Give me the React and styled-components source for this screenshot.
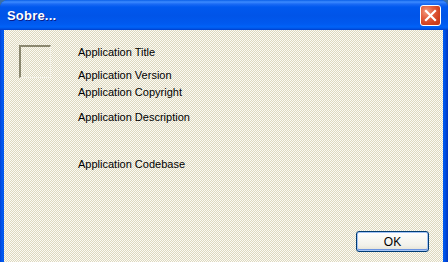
import React from "react";
import styled, { createGlobalStyle } from "styled-components";

const GlobalStyle = createGlobalStyle`
  html, body {
    margin: 0;
    padding: 0;
    background: #3a6ea5;
    overflow: hidden;
  }
`;

const info = [
  { text: "Application Title", gap: 0 },
  { text: "Application Version", gap: 10 },
  { text: "Application Copyright", gap: 4 },
  { text: "Application Description", gap: 12 },
  { text: "Application Codebase", gap: 34 },
];

function App() {
  return (
    <>
      <GlobalStyle />
      <Window>
        <TitleBar>
          <Title>Sobre...</Title>
          <CloseButton aria-label="Fechar">
            <svg width="13" height="13" viewBox="0 0 13 13">
              <path
                d="M2 2 L11 11 M11 2 L2 11"
                stroke="#fff"
                strokeWidth="2.2"
                strokeLinecap="square"
              />
            </svg>
          </CloseButton>
        </TitleBar>
        <Body>
          <Main>
            <Logo />
            <InfoList>
              {info.map((item) => (
                <InfoLine key={item.text} $gap={item.gap}>
                  {item.text}
                </InfoLine>
              ))}
            </InfoList>
          </Main>
          <Footer>
            <OkButton>OK</OkButton>
          </Footer>
        </Body>
      </Window>
    </>
  );
}

export default App;

const Window = styled.div`
  width: 448px;
  height: 262px;
  display: flex;
  flex-direction: column;
  border-radius: 8px 8px 0 0;
  overflow: hidden;
  background: linear-gradient(90deg, #0043d8, #0058ee 2px, #0058ee 444px, #0036c0);
`;

const TitleBar = styled.div`
  height: 30px;
  flex: none;
  display: flex;
  align-items: center;
  justify-content: space-between;
  padding: 0 7px 0 7px;
  box-sizing: border-box;
  background: linear-gradient(
    #0a5fe8 0,
    #3d8bff 2px,
    #1b6bf5 4px,
    #0058ee 7px,
    #0054e8 16px,
    #005af0 24px,
    #0063f8 27px,
    #0050e0 29px,
    #003cc8 30px
  );
`;

const Title = styled.span`
  font-family: "Liberation Sans", Arial, sans-serif;
  font-weight: bold;
  font-size: 13px;
  color: #fff;
  text-shadow: 1px 1px #0a1e8a;
  letter-spacing: 0.2px;
`;

const CloseButton = styled.div`
  width: 21px;
  height: 21px;
  box-sizing: border-box;
  border: 1px solid #fff;
  border-radius: 3px;
  display: flex;
  align-items: center;
  justify-content: center;
  background: radial-gradient(
    circle at 30% 30%,
    #f49c80 0,
    #e46040 35%,
    #d0401e 70%,
    #c2381a 100%
  );
  margin-top: 1px;
`;

const Body = styled.div`
  flex: 1;
  margin: 0 5px 0 4px;
  display: flex;
  flex-direction: column;
  background: repeating-conic-gradient(#ddd8c0 0 25%, #fcfbf4 0 50%) 0 0 / 2px 2px;
  font-family: "Liberation Sans", Arial, sans-serif;
  font-size: 11px;
  color: #000;
`;

const Main = styled.div`
  display: flex;
  align-items: flex-start;
  padding: 15px 0 0 15px;
`;

const Logo = styled.div`
  width: 32px;
  height: 33px;
  box-sizing: border-box;
  border-top: 2px solid #8a876f;
  border-left: 2px solid #8a876f;
  border-right: 1px solid #f4f2e8;
  border-bottom: 1px solid #f4f2e8;
  flex: none;
`;

const InfoList = styled.div`
  display: flex;
  flex-direction: column;
  margin-left: 27px;
  padding-top: 1px;
`;

const InfoLine = styled.div`
  line-height: 13px;
  margin-top: ${(p) => p.$gap}px;
`;

const Footer = styled.div`
  display: flex;
  justify-content: flex-end;
  padding-right: 14px;
  margin-top: 60px;
`;

const OkButton = styled.button`
  width: 73px;
  height: 21px;
  padding: 0;
  border: 1px solid #003c74;
  border-radius: 3px;
  font-family: "Liberation Sans", Arial, sans-serif;
  font-size: 12px;
  color: #000;
  background: linear-gradient(#ffffff, #f2f1ea 70%, #e3e0d2);
  box-shadow: inset 0 0 0 1px #a4c4f6, inset 0 -1px 0 1px #6c94e0;
`;
